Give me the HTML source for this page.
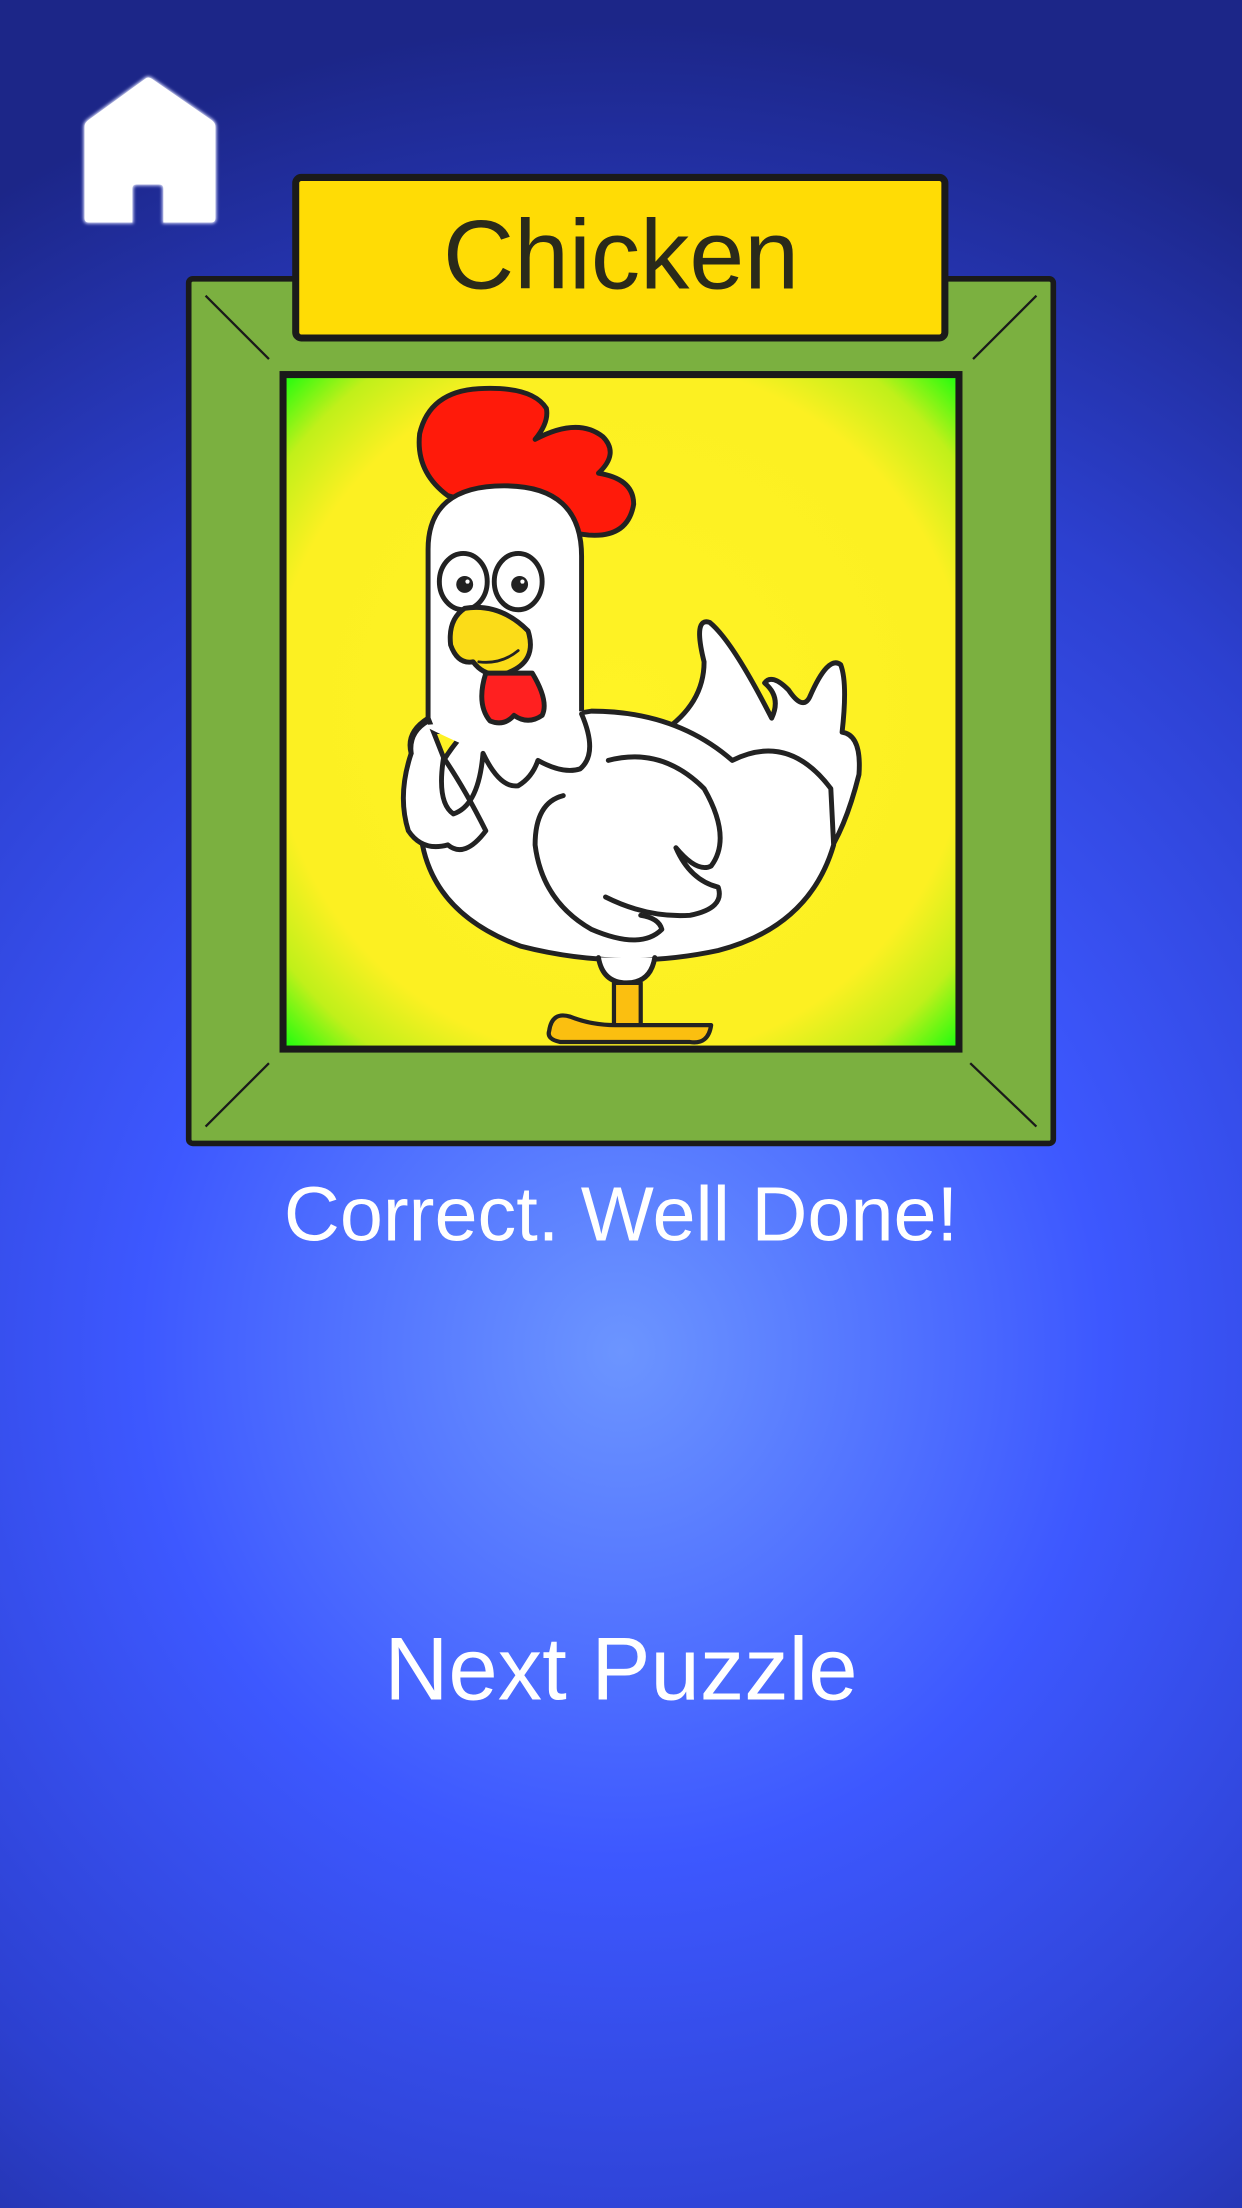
<!DOCTYPE html>
<html><head><meta charset="utf-8"><style>
html,body{margin:0;padding:0;width:1242px;height:2208px;overflow:hidden;background:#2b3cc8}
svg{display:block}
</style></head><body>
<svg width="1242" height="2208" viewBox="0 0 882 1568" xmlns="http://www.w3.org/2000/svg">
<defs>
<radialGradient id="bg" cx="441" cy="960" r="900" gradientUnits="userSpaceOnUse" gradientTransform="translate(441 960) scale(1 1.05) translate(-441 -960)">
<stop offset="0" stop-color="#6c95ff"/>
<stop offset="0.38" stop-color="#3d58ff"/>
<stop offset="0.7" stop-color="#2c40d0"/>
<stop offset="1" stop-color="#1c2688"/>
</radialGradient>
<radialGradient id="pic" cx="441" cy="505" r="345" gradientUnits="userSpaceOnUse">
<stop offset="0" stop-color="#fff325"/>
<stop offset="0.72" stop-color="#fcf022"/>
<stop offset="0.86" stop-color="#c0f01a"/>
<stop offset="1" stop-color="#00ff0c"/>
</radialGradient>
<filter id="glow" x="-20%" y="-20%" width="140%" height="140%"><feGaussianBlur stdDeviation="1.2"/></filter>
</defs>
<rect width="882" height="1568" fill="url(#bg)"/>
<!-- home -->
<path d="M60 90 Q60 87 63 85 L103 56 Q105 54 108 56 L150 85 Q153 87 153 90 L153 155 Q153 158 150 158 L116 158 L116 134 Q116 131 113 131 L97 131 Q94 131 94 134 L94 158 L63 158 Q60 158 60 155 Z" fill="#fff" stroke="#d8dcff" stroke-width="1.5" filter="url(#glow)"/>
<path d="M60 90 Q60 87 63 85 L103 56 Q105 54 108 56 L150 85 Q153 87 153 90 L153 155 Q153 158 150 158 L116 158 L116 134 Q116 131 113 131 L97 131 Q94 131 94 134 L94 158 L63 158 Q60 158 60 155 Z" fill="#fff"/>
<!-- frame -->
<rect x="134" y="198" width="614" height="614" rx="3" fill="#7bb040" stroke="#1a1a1a" stroke-width="4"/>
<g stroke="#1a1a1a" stroke-width="1.6">
<line x1="146" y1="210" x2="191" y2="255"/><line x1="736" y1="210" x2="691" y2="255"/>
<line x1="146" y1="800" x2="191" y2="755"/><line x1="736" y1="800" x2="689" y2="755"/>
</g>
<rect x="201" y="266" width="480" height="479" fill="url(#pic)" stroke="#1a1a1a" stroke-width="5"/>
<!-- label -->
<rect x="210" y="126" width="461" height="114" rx="4" fill="#ffdc05" stroke="#1a1a1a" stroke-width="5"/>
<text x="441" y="205" text-anchor="middle" font-family="Liberation Sans, sans-serif" font-size="70" fill="#2a2a1a">Chicken</text>
<!-- chicken -->
<g stroke="#222" stroke-width="3.5" stroke-linejoin="round" stroke-linecap="round">
<path d="M318 352 Q295 335 298 308 Q305 278 340 276 Q378 274 388 290 Q390 300 380 312 Q410 296 428 310 Q440 322 425 336 Q450 340 450 358 Q446 382 418 380 Q400 378 390 372 Z" fill="#ff1a0a"/>
<path d="M470 520 Q500 500 500 470 Q492 438 504 442 Q520 455 548 510 Q555 495 543 485 Q548 478 560 490 Q570 505 575 495 Q588 465 597 472 Q602 485 598 520 Q612 522 610 550 Q600 590 585 610 L470 620 Z" fill="#fff"/>
<path d="M300 600 Q310 650 370 672 Q440 690 510 675 Q575 658 592 600 L590 560 Q560 520 520 540 Q480 505 420 505 L330 520 Q295 560 300 600 Z" fill="#fff"/>
<path d="M304 390 Q304 345 358 345 Q413 345 413 395 L413 512 L304 520 Z" fill="#fff"/>
<path d="M304 510 Q288 520 292 535 Q282 565 290 590 Q300 605 318 600 Q330 610 345 590 Q330 560 315 538 Z" fill="#fff"/>
<path d="M300 515 Q340 535 360 540 Q380 552 410 548 Q428 530 413 505 Z" fill="#fff" stroke="none"/>
<path d="M292 535 Q290 520 304 512 M315 538 Q310 570 322 578 Q340 572 343 535 Q355 560 368 558 Q378 552 382 540 Q400 550 412 546 Q425 535 413 507" fill="none"/>
<path d="M432 540 Q470 530 500 560 Q520 595 505 615 Q495 620 480 602 Q490 625 510 630 Q515 645 490 650 Q460 652 430 637" fill="none"/>
<path d="M400 565 Q380 570 380 600 Q385 640 420 660 Q455 675 470 660 Q468 652 455 650" fill="none"/>
<ellipse cx="329" cy="413" rx="17" ry="20" fill="#fff"/>
<ellipse cx="368" cy="413" rx="17" ry="20" fill="#fff"/>
<path d="M330 432 Q355 428 375 448 Q382 470 360 478 Q345 482 336 470 Q325 472 320 458 Q318 440 330 432 Z" fill="#fbdc18"/>
<path d="M340 470 Q356 472 368 462" fill="none" stroke-width="2"/>
<path d="M345 478 Q338 500 348 512 Q358 516 365 508 Q375 515 385 508 Q390 498 378 478 Z" fill="#ff2020"/>
<path d="M425 680 Q428 698 445 698 Q462 698 465 680" fill="#fff"/>
<path d="M436 698 L436 728 L455 728 L455 698 Z" fill="#fbbf10" stroke-width="3"/>
<path d="M390 732 Q392 718 405 722 Q420 728 437 728 L505 728 Q503 742 490 740 L398 740 Q388 738 390 732 Z" fill="#fbbf10" stroke-width="3"/>
</g>
<circle cx="330" cy="415" r="6" fill="#222"/><circle cx="369" cy="415" r="6" fill="#222"/>
<circle cx="332" cy="413" r="1.5" fill="#fff"/><circle cx="371" cy="413" r="1.5" fill="#fff"/>
<text x="441" y="881" text-anchor="middle" font-family="Liberation Sans, sans-serif" font-size="55" fill="#fff">Correct. Well Done!</text>
<text x="441" y="1207" text-anchor="middle" font-family="Liberation Sans, sans-serif" font-size="63" fill="#fff">Next Puzzle</text>
</svg>
</body></html>
